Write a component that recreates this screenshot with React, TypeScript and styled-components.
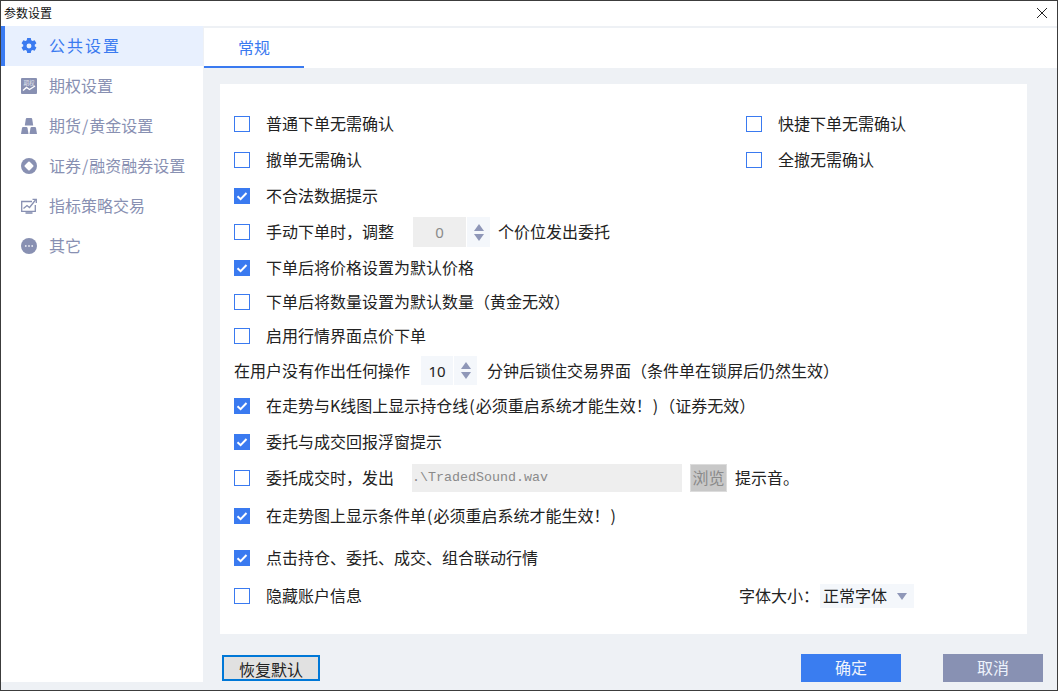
import React from 'react';
import styled, { createGlobalStyle } from 'styled-components';

const Global = createGlobalStyle`
  html, body { margin: 0; padding: 0; background: #fff; }
  body { font-family: "Noto Sans CJK SC", "Liberation Sans", sans-serif; color: #222; }
`;

const Window = styled.div`
  width: 1058px;
  height: 691px;
  box-sizing: border-box;
  border: 1px solid #3c3c3c;
  display: flex;
  flex-direction: column;
  background: #eef1f5;
  overflow: hidden;
`;

const TitleBar = styled.div`
  height: 25px;
  flex: none;
  box-sizing: border-box;
  background: #fff;
  display: flex;
  align-items: center;
  justify-content: space-between;
  padding: 0 10px 2px 3px;
  font-size: 12px;
  color: #111;
`;

const Body = styled.div`
  flex: 1;
  display: flex;
  min-height: 0;
`;

const Sidebar = styled.nav`
  width: 202px;
  height: 656px;
  flex: none;
  background: #fff;
`;

const NavItem = styled.div<{ $active?: boolean }>`
  height: 40px;
  box-sizing: border-box;
  display: flex;
  align-items: center;
  gap: 12px;
  padding-left: ${p => (p.$active ? '16px' : '20px')};
  border-left: ${p => (p.$active ? '4px solid #3a7af0' : 'none')};
  background: ${p => (p.$active ? '#e8f0fe' : '#fff')};
  color: ${p => (p.$active ? '#3a7af0' : '#8890b2')};
  font-size: 16px;
  letter-spacing: ${p => (p.$active ? '2px' : '0')};
  svg { width: 16px; height: 16px; flex: none; }
`;

// pulls a line of text one pixel above the centre of its row
const Label = styled.span`
  display: block;
  margin-bottom: 2px;
`;

// ascii punctuation runs wider in the original font
const Narrow = styled.span`
  padding: 0 1px;
`;

const Main = styled.main`
  flex: 1;
  margin-left: 1px;
  display: flex;
  flex-direction: column;
  min-width: 0;
`;

const TabBar = styled.div`
  height: 40px;
  flex: none;
  margin-top: 2px;
  background: #fff;
  display: flex;
`;

const Tab = styled.div`
  width: 100px;
  box-sizing: border-box;
  border-bottom: 2px solid #3a7af0;
  color: #3a7af0;
  font-size: 16px;
  display: flex;
  align-items: center;
  justify-content: center;
`;

const Panel = styled.section`
  margin: 16px 30px 0 16px;
  height: 550px;
  flex: none;
  background: #fff;
  box-sizing: border-box;
  padding: 22px 14px 0 14px;
  display: flex;
  flex-direction: column;
`;

const Row = styled.div<{ $h?: number }>`
  height: ${p => p.$h ?? 36}px;
  flex: none;
  display: flex;
  align-items: center;
  font-size: 16px;
  line-height: 20px;
  white-space: nowrap;
`;

const Half = styled.div`
  width: 512px;
  display: flex;
  align-items: center;
`;

const Box = styled.span<{ $on?: boolean }>`
  width: 16px;
  height: 16px;
  box-sizing: border-box;
  flex: none;
  margin-right: 16px;
  border: 1px solid #3a7af0;
  background: ${p => (p.$on ? '#3a7af0' : '#fff')};
  display: inline-flex;
  align-items: center;
  justify-content: center;
  svg { width: 12px; height: 12px; }
`;

const Spin = styled.div<{ $ml: number; $mr: number; $h: number }>`
  display: flex;
  flex: none;
  height: ${p => p.$h}px;
  margin: 0 ${p => p.$mr}px 0 ${p => p.$ml}px;
`;

const SpinValue = styled.div<{ $w: number; $light?: boolean }>`
  width: ${p => p.$w}px;
  background: ${p => (p.$light ? '#f4f7fb' : '#eeeeee')};
  color: ${p => (p.$light ? '#222' : '#8a8a8a')};
  display: flex;
  align-items: center;
  justify-content: center;
  font-family: "Noto Sans", sans-serif;
  font-size: 15px;
`;

const SpinArrows = styled.div`
  width: 23px;
  margin-left: 1px;
  background: #f4f7fb;
  display: flex;
  flex-direction: column;
  align-items: center;
  justify-content: center;
  gap: 3px;
`;

const Triangle = styled.span<{ $down?: boolean }>`
  width: 0;
  height: 0;
  border-left: 5px solid transparent;
  border-right: 5px solid transparent;
  ${p => (p.$down ? 'border-top: 7px solid #8f97b8;' : 'border-bottom: 7px solid #8f97b8;')}
`;

const PathField = styled.div`
  width: 270px;
  height: 28px;
  margin-left: 18px;
  background: #eeeeee;
  color: #8a8a8a;
  font-family: "Liberation Mono", monospace;
  font-size: 13.33px;
  display: flex;
  align-items: center;
`;

const Browse = styled.div`
  width: 37px;
  height: 28px;
  box-sizing: border-box;
  margin: 0 8px;
  padding-bottom: 2px;
  background: #c8c8c8;
  border: 1px solid #dcdcdc;
  color: #8a8a8a;
  display: flex;
  align-items: center;
  justify-content: center;
`;

const Spacer = styled.div`
  width: 377px;
  flex: none;
`;

const FontSelect = styled.div`
  width: 94px;
  height: 24px;
  margin-left: 1px;
  box-sizing: border-box;
  padding: 0 7px 0 3px;
  background: #f4f7fb;
  display: flex;
  align-items: center;
  justify-content: space-between;
`;

const Footer = styled.footer`
  flex: 1;
  display: flex;
  align-items: flex-start;
  padding: 20px 14px 0 18px;
`;

const ResetButton = styled.button`
  width: 98px;
  height: 26px;
  margin-top: 1px;
  box-sizing: border-box;
  border: 2px solid #0078d7;
  background: #e1e1e1;
  color: #222;
  font: 16px "Noto Sans CJK SC", sans-serif;
  padding: 0 0 4px;
`;

const ActionButton = styled.button<{ $muted?: boolean }>`
  width: 100px;
  height: 28px;
  border: 0;
  padding: 0 0 2px;
  margin-left: ${p => (p.$muted ? '42px' : 'auto')};
  background: ${p => (p.$muted ? '#8891b3' : '#3a7df0')};
  color: #eef3fc;
  font: 16px "Noto Sans CJK SC", sans-serif;
`;

const Check = () => (
  <svg viewBox="0 0 12 12" fill="none" stroke="#fff" strokeWidth="2">
    <path d="M1.5 6.2 L4.6 9.2 L10.500 3" />
  </svg>
);

const Option: React.FC<{ on?: boolean; children: React.ReactNode }> = ({ on, children }) => (
  <>
    <Box $on={on}>{on && <Check />}</Box>
    <Label>{children}</Label>
  </>
);

const Stepper: React.FC<{ value: string; w: number; ml: number; mr: number; h: number; light?: boolean }> = ({ value, w, ml, mr, h, light }) => (
  <Spin $ml={ml} $mr={mr} $h={h}>
    <SpinValue $w={w} $light={light}>{value}</SpinValue>
    <SpinArrows>
      <Triangle />
      <Triangle $down />
    </SpinArrows>
  </Spin>
);

const GearIcon = () => (
  <svg viewBox="1 0.5 14 15">
    <path fillRule="evenodd" fill="#3a7af0" d="M6.3 0.500h3.4l.4 2 1.200.7 2-.7 1.700 3-1.600 1.300v1.400l1.600 1.300-1.700 3-2-.7-1.200.7-.4 2H6.300l-.4-2-1.200-.7-2 .7-1.700-3 1.600-1.300V6.800L1 5.500l1.700-3 2 .7 1.200-.7zM8 5.700a2.300 2.300 0 1 0 0 4.600 2.300 2.300 0 0 0 0-4.600z" />
  </svg>
);

const OptionIcon = () => (
  <svg viewBox="0 0 16 16">
    <rect width="16" height="16" rx="1" fill="#8890b2" />
    <text x="8" y="6.500" textAnchor="middle" fontSize="5.500" fill="#e4e6ef" fontFamily="Noto Sans CJK SC, sans-serif">期权</text>
    <path d="M2 12.500 L5.500 9.500 L8.500 11.500 L14 8" fill="none" stroke="#fff" strokeWidth="1.400" />
  </svg>
);

const GoldIcon = () => (
  <svg viewBox="0 0 16 16" fill="#8890b2">
    <path d="M5.800 0h4.400q.8 0 1 1l1 6.500H3.800l1-6.500q.2-1 1-1z" />
    <path d="M2 9h3.500q.8 0 1 1l1 6H0l1-6q.2-1 1-1z" />
    <path d="M10.500 9H14q.8 0 1 1l1 6H8.500l1-6q.2-1 1-1z" />
  </svg>
);

const StockIcon = () => (
  <svg viewBox="0 0 16 16">
    <circle cx="8" cy="8" r="8" fill="#8890b2" />
    <path d="M8 4.500 L11.500 8 L8 11.500 L4.500 8z" fill="#fff" stroke="#fff" strokeWidth="2" strokeLinejoin="round" />
  </svg>
);

const TrendIcon = () => (
  <svg viewBox="0 0 16 16" fill="none" stroke="#8890b2" strokeWidth="1.300">
    <path d="M11 3.500H0.700v9.800h13.600V7" />
    <path d="M2.500 10.500 L6 7.500 L8.500 9.500 L14.500 2" />
    <path d="M11.500 1.300h3.800v3.800" />
    <path d="M4.500 15h7" strokeWidth="1.600" />
  </svg>
);

const MoreIcon = () => (
  <svg viewBox="0 0 16 16">
    <circle cx="8" cy="8" r="8" fill="#8890b2" />
    <circle cx="4.800" cy="8" r="0.900" fill="#e8eaf2" />
    <circle cx="8" cy="8" r="0.900" fill="#e8eaf2" />
    <circle cx="11.200" cy="8" r="0.900" fill="#e8eaf2" />
  </svg>
);

const App: React.FC = () => (
  <Window>
    <Global />
    <TitleBar>
      参数设置
      <svg width="10" height="10" viewBox="0 0 10 10" stroke="#222" strokeWidth="1">
        <path d="M0 0 L10 10 M10 0 L0 10" />
      </svg>
    </TitleBar>
    <Body>
      <Sidebar>
        <NavItem $active><GearIcon /><Label>公共设置</Label></NavItem>
        <NavItem><OptionIcon /><Label>期权设置</Label></NavItem>
        <NavItem><GoldIcon /><Label>期货<Narrow>/</Narrow>黄金设置</Label></NavItem>
        <NavItem><StockIcon /><Label>证券<Narrow>/</Narrow>融资融券设置</Label></NavItem>
        <NavItem><TrendIcon /><Label>指标策略交易</Label></NavItem>
        <NavItem><MoreIcon /><Label>其它</Label></NavItem>
      </Sidebar>
      <Main>
        <TabBar><Tab>常规</Tab></TabBar>
        <Panel>
          <Row>
            <Half><Option>普通下单无需确认</Option></Half>
            <Option>快捷下单无需确认</Option>
          </Row>
          <Row>
            <Half><Option>撤单无需确认</Option></Half>
            <Option>全撤无需确认</Option>
          </Row>
          <Row><Option on>不合法数据提示</Option></Row>
          <Row>
            <Option>手动下单时，调整</Option>
            <Stepper value="0" w={53} ml={19} mr={8} h={30} />
            <Label>个价位发出委托</Label>
          </Row>
          <Row $h={35}><Option on>下单后将价格设置为默认价格</Option></Row>
          <Row $h={34}><Option>下单后将数量设置为默认数量（黄金无效）</Option></Row>
          <Row $h={34}><Option>启用行情界面点价下单</Option></Row>
          <Row $h={35}>
            <Label>在用户没有作出任何操作</Label>
            <Stepper value="10" w={32} ml={11} mr={10} h={29} light />
            <Label>分钟后锁住交易界面（条件单在锁屏后仍然生效）</Label>
          </Row>
          <Row><Option on>在走势与K线图上显示持仓线<Narrow>(</Narrow>必须重启系统才能生效！<Narrow>)</Narrow>（证券无效）</Option></Row>
          <Row><Option on>委托与成交回报浮窗提示</Option></Row>
          <Row>
            <Option>委托成交时，发出</Option>
            <PathField>.\TradedSound.wav</PathField>
            <Browse>浏览</Browse>
            <Label>提示音。</Label>
          </Row>
          <Row $h={40}><Option on>在走势图上显示条件单<Narrow>(</Narrow>必须重启系统才能生效！<Narrow>)</Narrow></Option></Row>
          <Row $h={44}><Option on>点击持仓、委托、成交、组合联动行情</Option></Row>
          <Row $h={32}>
            <Option>隐藏账户信息</Option>
            <Spacer />
            <Label>字体大小：</Label>
            <FontSelect><Label>正常字体</Label><Triangle $down /></FontSelect>
          </Row>
        </Panel>
        <Footer>
          <ResetButton>恢复默认</ResetButton>
          <ActionButton>确定</ActionButton>
          <ActionButton $muted>取消</ActionButton>
        </Footer>
      </Main>
    </Body>
  </Window>
);

export default App;
